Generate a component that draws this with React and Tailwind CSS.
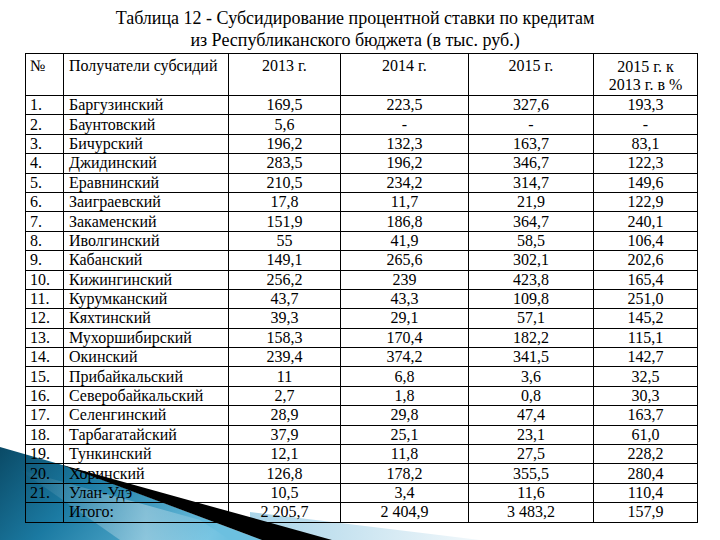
import React from 'react';

const rows = [
  ['1.', 'Баргузинский', '169,5', '223,5', '327,6', '193,3'],
  ['2.', 'Баунтовский', '5,6', '-', '-', '-'],
  ['3.', 'Бичурский', '196,2', '132,3', '163,7', '83,1'],
  ['4.', 'Джидинский', '283,5', '196,2', '346,7', '122,3'],
  ['5.', 'Еравнинский', '210,5', '234,2', '314,7', '149,6'],
  ['6.', 'Заиграевский', '17,8', '11,7', '21,9', '122,9'],
  ['7.', 'Закаменский', '151,9', '186,8', '364,7', '240,1'],
  ['8.', 'Иволгинский', '55', '41,9', '58,5', '106,4'],
  ['9.', 'Кабанский', '149,1', '265,6', '302,1', '202,6'],
  ['10.', 'Кижингинский', '256,2', '239', '423,8', '165,4'],
  ['11.', 'Курумканский', '43,7', '43,3', '109,8', '251,0'],
  ['12.', 'Кяхтинский', '39,3', '29,1', '57,1', '145,2'],
  ['13.', 'Мухоршибирский', '158,3', '170,4', '182,2', '115,1'],
  ['14.', 'Окинский', '239,4', '374,2', '341,5', '142,7'],
  ['15.', 'Прибайкальский', '11', '6,8', '3,6', '32,5'],
  ['16.', 'Северобайкальский', '2,7', '1,8', '0,8', '30,3'],
  ['17.', 'Селенгинский', '28,9', '29,8', '47,4', '163,7'],
  ['18.', 'Тарбагатайский', '37,9', '25,1', '23,1', '61,0'],
  ['19.', 'Тункинский', '12,1', '11,8', '27,5', '228,2'],
  ['20.', 'Хоринский', '126,8', '178,2', '355,5', '280,4'],
  ['21.', 'Улан-Удэ', '10,5', '3,4', '11,6', '110,4'],
  ['', 'Итого:', '2 205,7', '2 404,9', '3 483,2', '157,9'],
];

const cell = 'border border-black p-0 align-middle';

export default function App() {
  return (
    <div
      className="relative w-[720px] h-[540px] overflow-hidden bg-white text-black"
      style={{ fontFamily: '"Liberation Serif", "Times New Roman", serif' }}
    >
      {/* blue corner decoration, behind the table */}
      <svg className="absolute left-0 top-0 z-0" width="720" height="540" viewBox="0 0 720 540">
        <defs>
          <linearGradient id="blueFill" x1="0" y1="0" x2="1" y2="0.3">
            <stop offset="0" stopColor="#0a4a66" />
            <stop offset="0.4" stopColor="#1b7aa2" />
            <stop offset="1" stopColor="#6cc0e0" />
          </linearGradient>
          <linearGradient id="streak" x1="0" y1="0" x2="1" y2="0">
            <stop offset="0" stopColor="#ffffff" stopOpacity="0" />
            <stop offset="0.6" stopColor="#ffffff" stopOpacity="0.35" />
            <stop offset="1" stopColor="#ffffff" stopOpacity="0" />
          </linearGradient>
          <linearGradient id="paleFill" x1="0" y1="0" x2="1" y2="0">
            <stop offset="0" stopColor="#a9d4e8" />
            <stop offset="1" stopColor="#f2f8fb" />
          </linearGradient>
        </defs>
        <polygon points="250,512 480,540 250,540" fill="url(#paleFill)" />
        <polygon points="0,447 66,466 262,540 0,540" fill="url(#blueFill)" />
        <polygon points="20,470 200,520 230,540 120,540" fill="url(#streak)" />
      </svg>

      <div className="relative z-10 pt-[7px]">
        <div className="w-[710px] text-center text-[18px] leading-[22px]">
          <div>Таблица 12 - Субсидирование процентной ставки по кредитам</div>
          <div>из Республиканского бюджета (в тыс. руб.)</div>
        </div>

        <table className="ml-[25px] mt-[2px] table-fixed border-collapse text-[16px] leading-none">
          <colgroup>
            <col className="w-[38px]" />
            <col className="w-[165px]" />
            <col className="w-[112px]" />
            <col className="w-[128px]" />
            <col className="w-[125px]" />
            <col className="w-[104px]" />
          </colgroup>
          <thead>
            <tr className="h-[42px]">
              <td className={`${cell} !align-top pl-[4px] pt-[4px]`}>№</td>
              <td className={`${cell} !align-top pl-[5px] pt-[4px]`}>Получатели субсидий</td>
              <td className={`${cell} !align-top text-center pt-[4px]`}>2013 г.</td>
              <td className={`${cell} !align-top text-center pt-[4px]`}>2014 г.</td>
              <td className={`${cell} !align-top text-center pt-[4px]`}>2015 г.</td>
              <td className={`${cell} !align-top text-center pt-[4px] leading-[18px]`}>
                2015 г. к<br />2013 г. в %
              </td>
            </tr>
          </thead>
          <tbody>
            {rows.map((r, i) => (
              <tr key={i} className="h-[19.4px]">
                <td className={`${cell} pl-[4px]`}>{r[0]}</td>
                <td className={`${cell} pl-[5px]`}>{r[1]}</td>
                <td className={`${cell} text-center`}>{r[2]}</td>
                <td className={`${cell} text-center`}>{r[3]}</td>
                <td className={`${cell} text-center`}>{r[4]}</td>
                <td className={`${cell} text-center`}>{r[5]}</td>
              </tr>
            ))}
          </tbody>
        </table>
      </div>

      {/* black stripe lies over the table */}
      <svg className="pointer-events-none absolute left-0 top-0 z-20" width="720" height="540" viewBox="0 0 720 540">
        <polygon points="62,465 66,466 332,540 262,540" fill="#000" />
      </svg>
    </div>
  );
}
